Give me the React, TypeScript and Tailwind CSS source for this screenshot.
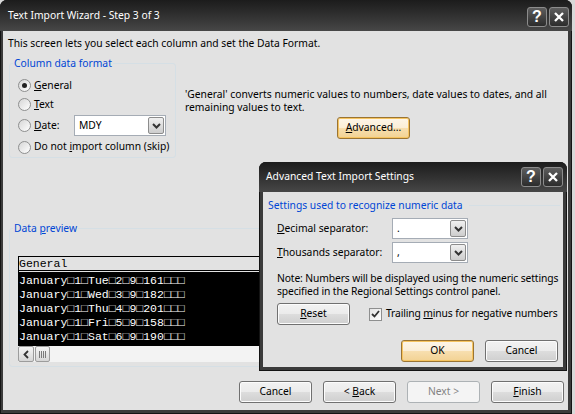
import type { ReactNode } from 'react'

const previewRows = [
  'January□1□Tue□2□9□161□□□',
  'January□1□Wed□3□9□182□□□',
  'January□1□Thu□4□9□201□□□',
  'January□1□Fri□5□9□158□□□',
  'January□1□Sat□6□9□190□□□',
]

function CaptionButtons() {
  return (
    <div className="flex gap-[2px]">
      <div className="flex h-[20px] w-[20px] items-center justify-center rounded-[3px] border border-[#8c8c8c] bg-linear-to-b from-[#5e5e5e] to-[#2c2c2c] font-['Liberation_Sans',sans-serif] text-[16px] leading-none font-bold text-white">
        ?
      </div>
      <div className="flex h-[20px] w-[20px] items-center justify-center rounded-[3px] border border-[#8c8c8c] bg-linear-to-b from-[#5e5e5e] to-[#2c2c2c]">
        <svg width="12" height="12" viewBox="0 0 12 12">
          <path d="M2 2l8 8M10 2l-8 8" stroke="white" strokeWidth="2.3" />
        </svg>
      </div>
    </div>
  )
}

function Button({ children, variant = 'normal' }: { children: ReactNode; variant?: 'normal' | 'default' | 'disabled' }) {
  const look =
    variant === 'default'
      ? 'border-[#9a7433] bg-[linear-gradient(#fdf6e9,#fbeed6_50%,#f7dfb0_50%,#f2d293)] shadow-[inset_0_0_0_1px_#f6c460]'
      : variant === 'disabled'
      ? 'border-[#adb2b5] bg-[#f4f4f4] text-[#838383]'
      : 'border-[#707070] bg-[linear-gradient(#f2f2f2,#ebebeb_50%,#dddddd_50%,#cfcfcf)] shadow-[inset_0_0_0_1px_#fcfcfc]'
  return (
    <div className={`flex h-[22px] w-[73px] shrink-0 items-center justify-center rounded-[3px] border whitespace-nowrap ${look}`}>
      {children}
    </div>
  )
}

function Radio({ checked = false, children, tall = '' }: { checked?: boolean; children: ReactNode; tall?: string }) {
  return (
    <div className={`flex items-center gap-[3px] ${tall}`}>
      <span className="flex h-[13px] w-[13px] items-center justify-center rounded-full border border-[#8e8f8f] bg-linear-to-br from-[#d6d6d6] to-[#ffffff]">
        {checked && <span className="h-[5px] w-[5px] rounded-full bg-[#222]" />}
      </span>
      {children}
    </div>
  )
}

function Combo({ value, width }: { value: string; width: string }) {
  return (
    <div className={`flex h-[21px] items-stretch border border-[#a5acb5] bg-white ${width}`}>
      <span className="flex flex-1 items-center pl-[4px]">{value}</span>
      <span className="m-[1px] flex w-[16px] items-center justify-center rounded-[2px] border border-[#8c8c8c] bg-linear-to-b from-[#f0f0f0] to-[#cdcdcd]">
        <svg width="9" height="6" viewBox="0 0 9 6">
          <path d="M1 1l3.5 3.5L8 1" stroke="#333" strokeWidth="2" fill="none" />
        </svg>
      </span>
    </div>
  )
}

function Preview() {
  return (
    <div className="flex h-[106px] w-[535px] flex-col bg-black font-['Liberation_Mono','DejaVu_Sans_Mono',monospace] text-[11.5px]">
      <div className="mt-[1px] ml-[1px] flex h-[13px] items-end bg-[#e2e2e2] leading-[12px] text-black">General</div>
      <div className="mt-[1px] ml-[1px] h-[1px] bg-[#e2e2e2]" />
      <div className="flex-1 pt-[2px] pl-[1px] text-white">
        {previewRows.map((row, i) => (
          <div key={i} className="h-[14px] leading-[14px] whitespace-pre">
            {row}
          </div>
        ))}
      </div>
      <div className="flex h-[16px] bg-[#f3f3f3]">
        <div className="flex w-[16px] items-center justify-center rounded-[2px] border border-[#9c9c9c] bg-linear-to-b from-[#f6f6f6] to-[#d6d6d6]">
          <svg width="6" height="9" viewBox="0 0 6 9">
            <path d="M5 1L1.5 4.5 5 8" stroke="#333" strokeWidth="1.8" fill="none" />
          </svg>
        </div>
        <div className="ml-px flex w-[15px] items-center justify-center gap-px rounded-[2px] border border-[#9c9c9c] bg-linear-to-b from-[#f6f6f6] to-[#d6d6d6]">
          <span className="h-[7px] w-px bg-[#7a7a7a]" />
          <span className="h-[7px] w-px bg-[#7a7a7a]" />
          <span className="h-[7px] w-px bg-[#7a7a7a]" />
          <span className="h-[7px] w-px bg-[#7a7a7a]" />
        </div>
      </div>
    </div>
  )
}

function Checkbox() {
  return (
    <span className="flex h-[13px] w-[13px] items-center justify-center border border-[#8e8f8f] bg-linear-to-br from-[#e4e4e4] to-[#ffffff]">
      <svg width="9" height="8" viewBox="0 0 9 8">
        <path d="M1 4l2.5 2.5L8 1" stroke="#333" strokeWidth="1.8" fill="none" />
      </svg>
    </span>
  )
}

function AdvancedDialog() {
  return (
    <div className="absolute top-[162px] left-[259px] flex h-[209px] w-[308px] flex-col rounded-t-[7px] bg-[#3b3b3b] shadow-[inset_0_0_0_1px_#141414]">
      <div className="flex h-[30px] shrink-0 items-center justify-between rounded-t-[7px] bg-linear-to-b from-[#1c1c1c] to-[#474747] pr-[4px] pl-[7px] text-white">
        <span>Advanced Text Import Settings</span>
        <CaptionButtons />
      </div>
      <div className="mx-[4px] mb-[4px] flex flex-1 flex-col overflow-hidden bg-[#e2e2e2] whitespace-nowrap">
        <div className="mt-[6px] flex items-center pr-[3px] pl-[5px]">
          <span className="leading-[15px] text-[#0046d5]">Settings used to recognize numeric data</span>
          <span className="ml-[6px] h-px flex-1 bg-[#d5dfe5]" />
        </div>
        <div className="mt-[5px] flex h-[21px] items-center pl-[14px]">
          <span className="w-[115px]">
            <u>D</u>ecimal separator:
          </span>
          <Combo value="." width="w-[76px]" />
        </div>
        <div className="mt-[3px] flex h-[21px] items-center pl-[14px]">
          <span className="w-[115px]">
            <u>T</u>housands separator:
          </span>
          <Combo value="," width="w-[76px]" />
        </div>
        <p className="mt-[9px] pl-[14px] leading-[13px] tracking-[-0.12px]">
          Note: Numbers will be displayed using the numeric settings
          <br />
          specified in the Regional Settings control panel.
        </p>
        <div className="mt-[5px] flex items-center pl-[14px]">
          <Button>
            <span>
              <u>R</u>eset
            </span>
          </Button>
          <span className="ml-[19px]">
            <Checkbox />
          </span>
          <span className="ml-[4px] tracking-[-0.12px]">
            Trailing <u>m</u>inus for negative numbers
          </span>
        </div>
        <div className="mt-[15px] flex justify-end gap-[11px] pr-[5px]">
          <Button variant="default">OK</Button>
          <Button>Cancel</Button>
        </div>
      </div>
    </div>
  )
}

export default function App() {
  return (
    <div className="relative h-[414px] w-[575px] overflow-hidden bg-[#d9d9d9] font-['Noto_Sans',sans-serif] text-[10.3px] text-black">
      <div className="flex h-[414px] w-[572px] flex-col rounded-t-[7px] bg-[#3b3b3b] shadow-[inset_0_0_0_1px_#141414]">
        <div className="flex h-[31px] shrink-0 items-center justify-between rounded-t-[7px] bg-linear-to-b from-[#1c1c1c] to-[#474747] pr-[3px] pl-[8px] text-white">
          <span>Text Import Wizard - Step 3 of 3</span>
          <div className="mt-[3px]">
            <CaptionButtons />
          </div>
        </div>

        <div className="mr-[4px] mb-[4px] ml-[3px] flex flex-1 flex-col bg-[#e2e2e2]">
          <p className="mt-[5px] pl-[5px] leading-[15px]">This screen lets you select each column and set the Data Format.</p>

          <div className="mt-[5px] flex">
            <fieldset className="ml-[6px] w-[167px] rounded-[3px] border border-[#d5dfe5]">
              <legend className="ml-[3px] px-[1px] leading-[15px] text-[#0046d5]">Column data format</legend>
              <div className="flex flex-col pt-[5px] pl-[8px]">
                <Radio checked tall="h-[19px]">
                  <span>
                    <u>G</u>eneral
                  </span>
                </Radio>
                <Radio tall="h-[19px]">
                  <span>
                    <u>T</u>ext
                  </span>
                </Radio>
                <Radio tall="h-[23px]">
                  <span className="w-[37px]">
                    <u>D</u>ate:
                  </span>
                  <Combo value="MDY" width="w-[92px]" />
                </Radio>
                <Radio tall="h-[20px]">
                  <span>
                    Do not <u>i</u>mport column (skip)
                  </span>
                </Radio>
              </div>
            </fieldset>

            <div className="ml-[9px] flex flex-col pt-[32px]">
              <p className="leading-[13px] whitespace-nowrap">
                'General' converts numeric values to numbers, date values to dates, and all
                <br />
                remaining values to text.
              </p>
              <div className="mt-[3px] ml-[152px]">
                <Button variant="default">
                  <span>
                    <u>A</u>dvanced...
                  </span>
                </Button>
              </div>
            </div>
          </div>

          <fieldset className="mt-[63px] ml-[6px] w-[553px] rounded-[3px] border border-[#d5dfe5]">
            <legend className="ml-[3px] px-[1px] leading-[15px] text-[#0046d5]">
              Data <u>p</u>review
            </legend>
            <div className="pt-[20px] pb-[4px] pl-[8px]">
              <Preview />
            </div>
          </fieldset>

          <div className="mt-[14px] flex justify-end gap-[11px] pr-[4px]">
            <Button>Cancel</Button>
            <Button>
              <span>
                &lt; <u>B</u>ack
              </span>
            </Button>
            <Button variant="disabled">Next &gt;</Button>
            <Button>
              <span>
                <u>F</u>inish
              </span>
            </Button>
          </div>
        </div>
      </div>

      <AdvancedDialog />
    </div>
  )
}
